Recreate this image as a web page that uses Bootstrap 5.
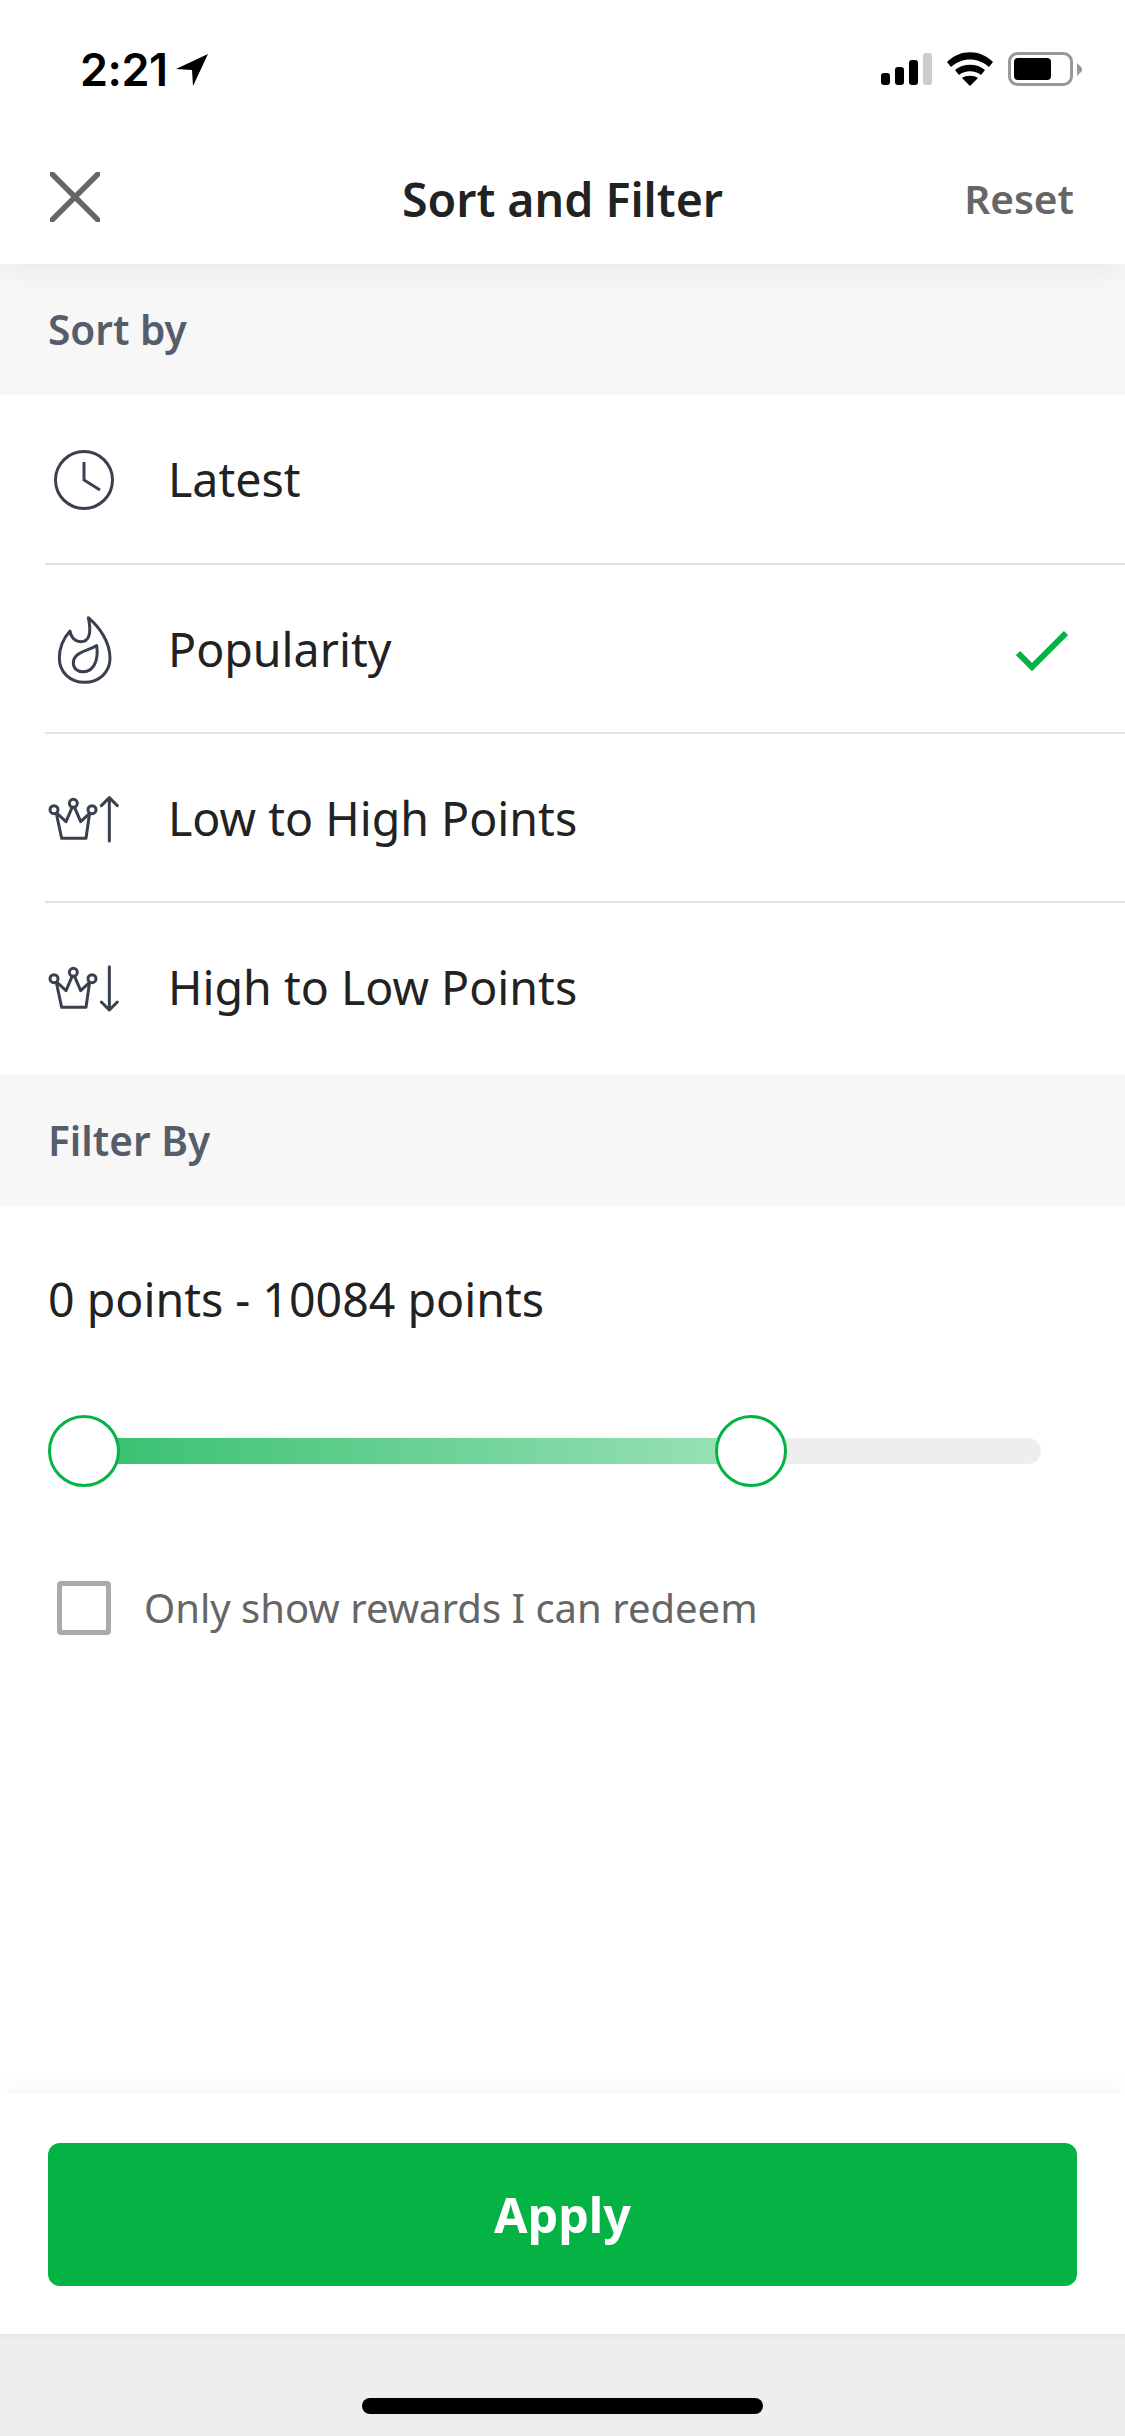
<!DOCTYPE html>
<html lang="en">
<head>
<meta charset="utf-8">
<title>Sort and Filter</title>
<link href="https://cdn.jsdelivr.net/npm/bootstrap@5.3.0/dist/css/bootstrap.min.css" rel="stylesheet">
<style>
html,body{margin:0;background:#fff}
.screen{width:1125px;height:2436px;font-family:"Noto Sans","Open Sans",sans-serif;color:#222;overflow:hidden}
.status-row{height:135px;padding:4px 43px 0 80px;position:relative;z-index:3;background:#fff}
.clock-text{font-family:Inter,"Liberation Sans",sans-serif;font-weight:600;font-size:45px;line-height:1;color:#000;letter-spacing:-.5px}
.head-row{height:129px;padding:0 48px;position:relative;z-index:2;box-shadow:0 8px 24px rgba(0,0,0,.05)}
.head-title{font-size:46.5px;font-weight:600;color:#222;left:0;right:0;text-align:center;position:absolute}
.head-reset{font-size:40.5px;font-weight:600;color:#666;margin-left:auto;margin-right:3px}
.close-glyph{margin:-5px 0 0 2px}
.sec-bar{height:131px;background:#f7f7f7;padding:2px 48px 0;font-size:40.6px;font-weight:600;color:#555d6b}
.sort-row{height:169px;margin-left:45px;border-bottom:2px solid #e2e2e2;padding:2px 57px 0 0}
.sort-row.first-row{height:170px}
.sort-row.last-row{border-bottom:0;height:172px;padding:0 57px 2px 0}
.icon-slot{width:168px;margin-left:-45px;flex:none}
.glyph-clock{margin-left:54px}
.glyph-flame{margin:0 0 0 40px}
.glyph-crown{margin:2px 0 0 40px}
.sort-label{font-size:46.5px;color:#222}
.points-line{font-size:46.5px;color:#222;padding:0 48px;margin-top:62px;line-height:62px}
.range-wrap{height:72px;margin:85px 84px 0 48px;position:relative}
.range-track{position:absolute;left:0;right:0;top:23px;height:26px;border-radius:13px;background:#eee}
.range-fill{position:absolute;left:35px;top:23px;height:26px;background:linear-gradient(90deg,#36c06f,#9ce2b9)}
.range-thumb{position:absolute;top:0;width:72px;height:72px;border-radius:50%;background:#fff;border:3px solid #04b343}
.redeem-row{margin-top:91px;padding-left:57px}
.redeem-box{width:54px;height:54px;border:5px solid #aaa;border-radius:4px;background:#fff;flex:none}
.redeem-text{font-size:40px;color:#666;margin-left:33px}
.grow-fill{flex:1 1 auto}
.apply-wrap{height:240px;padding:49px 48px;box-shadow:0 -8px 24px rgba(0,0,0,.03);position:relative}
.apply-btn{display:block;width:100%;height:143px;background:#04b343;border:0;border-radius:12px;color:#fff;font-size:48.5px;font-weight:700}
.home-zone{height:102px;background:#eee;box-shadow:inset 0 8px 10px -8px rgba(0,0,0,.05)}
.home-pill{width:401px;height:16px;border-radius:8px;background:#000;margin-top:64px}
</style>
</head>
<body>
<div class="screen d-flex flex-column">
  <div class="status-row d-flex align-items-center justify-content-between">
    <div class="d-flex align-items-center gap-2">
      <span class="clock-text">2:21</span>
      <svg width="34" height="34" viewBox="0 0 34 34"><path d="M33 1 1 16l16 1 1 16z" fill="#000"/></svg>
    </div>
    <svg width="202" height="36" viewBox="880 52 202 36">
      <rect x="881" y="73" width="9" height="12" rx="3"/><rect x="895" y="67" width="9" height="18" rx="3"/><rect x="909" y="60" width="9" height="25" rx="3"/><rect x="923" y="53" width="9" height="32" rx="3" fill="#ccc"/>
      <path d="M947 62c13-13 33-13 46 0l-4 5c-11-10-27-10-38 0z"/><path d="M955 70c8-7 22-7 30 0l-4 5c-6-5-16-5-22 0z"/><path d="M962 78c4-3 12-3 16 0l-8 8z"/>
      <rect x="1009.5" y="53.5" width="62" height="31" rx="8" fill="none" stroke="#999" stroke-width="3"/><rect x="1014" y="58" width="37" height="22" rx="4"/><path d="M1077 63l5 5v3l-5 5z" fill="#999"/>
    </svg>
  </div>
  <div class="head-row d-flex align-items-center bg-white">
    <svg class="close-glyph" width="50" height="50" viewBox="0 0 50 50"><path d="M2 2l46 46M48 2 2 48" stroke="#666" stroke-width="5.5" stroke-linecap="round" fill="none"/></svg>
    <span class="head-title">Sort and Filter</span>
    <span class="head-reset">Reset</span>
  </div>
  <div class="sec-bar d-flex align-items-center">Sort by</div>
  <div class="sort-row first-row d-flex align-items-center">
    <div class="icon-slot"><svg class="d-block glyph-clock" width="60" height="60" viewBox="0 0 60 60"><circle cx="30" cy="30" r="28.5" fill="none" stroke="#39414f" stroke-width="3"/><path d="M30 12v18l16 10" fill="none" stroke="#39414f" stroke-width="3"/></svg></div>
    <span class="sort-label">Latest</span>
  </div>
  <div class="sort-row d-flex align-items-center">
    <div class="icon-slot"><svg class="d-block glyph-flame" width="90" height="90" viewBox="0 0 270 270"><g fill="none" stroke="#39414f" stroke-width="9" stroke-linejoin="round"><path d="M145 38C180 68 210 112 210 160c0 42-33 72-76 72-43 0-76-30-76-72 0-30 12-60 32-82 2 18 14 32 32 32 24 0 34-22 23-72z"/><path d="M170 122c4 24 2 78-42 78-16 0-28-10-28-26 0-32 38-34 70-52z"/></g></svg></div>
    <span class="sort-label">Popularity</span>
    <svg class="ms-auto" width="54" height="42" viewBox="0 0 54 42"><path d="M4 24l14 14L52 4" fill="none" stroke="#04b343" stroke-width="6"/></svg>
  </div>
  <div class="sort-row d-flex align-items-center">
    <div class="icon-slot"><svg class="d-block glyph-crown" width="90" height="70" viewBox="0 0 270 210"><g fill="none" stroke="#39414f" stroke-width="9" stroke-linecap="round" stroke-linejoin="round"><circle cx="42" cy="74" r="12"/><circle cx="100" cy="55" r="12"/><circle cx="156" cy="74" r="12"/><path d="M52 86l26 24 18-42M104 68l18 42 26-24M50 90l15 70h73l10-70"/><path d="M208 38v130M184 62l24-24 24 24"/></g></svg></div>
    <span class="sort-label">Low to High Points</span>
  </div>
  <div class="sort-row last-row d-flex align-items-center">
    <div class="icon-slot"><svg class="d-block glyph-crown" width="90" height="70" viewBox="0 0 270 210"><g fill="none" stroke="#39414f" stroke-width="9" stroke-linecap="round" stroke-linejoin="round"><circle cx="42" cy="74" r="12"/><circle cx="100" cy="55" r="12"/><circle cx="156" cy="74" r="12"/><path d="M52 86l26 24 18-42M104 68l18 42 26-24M50 90l15 70h73l10-70"/><path d="M208 38v130M184 144l24 24 24-24"/></g></svg></div>
    <span class="sort-label">High to Low Points</span>
  </div>
  <div class="sec-bar d-flex align-items-center">Filter By</div>
  <div class="points-line">0 points - 10084 points</div>
  <div class="range-wrap">
    <div class="range-track"></div>
    <div class="range-fill" style="width:670px"></div>
    <div class="range-thumb" style="left:0"></div>
    <div class="range-thumb" style="left:667px"></div>
  </div>
  <div class="redeem-row d-flex align-items-center">
    <div class="redeem-box"></div>
    <span class="redeem-text">Only show rewards I can redeem</span>
  </div>
  <div class="grow-fill"></div>
  <div class="apply-wrap bg-white"><button class="apply-btn" type="button">Apply</button></div>
  <div class="home-zone d-flex justify-content-center"><div class="home-pill"></div></div>
</div>
<script src="https://cdn.jsdelivr.net/npm/bootstrap@5.3.0/dist/js/bootstrap.bundle.min.js"></script>
</body>
</html>
